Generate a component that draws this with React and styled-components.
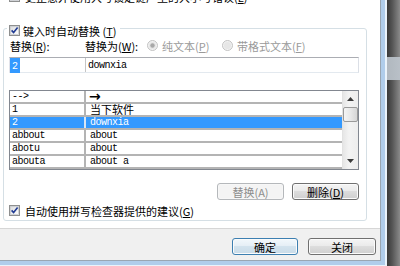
import React from "react";
import styled, { createGlobalStyle } from "styled-components";

const Global = createGlobalStyle`
  html, body { margin: 0; padding: 0; }
  body {
    width: 400px; height: 266px; overflow: hidden;
    font-family: "Noto Sans CJK SC", "Liberation Sans", sans-serif;
    font-size: 11px; color: #000;
  }
`;

const Screen = styled.div`
  display: flex;
  width: 400px;
  height: 266px;
  overflow: hidden;
`;

const Frame = styled.div`
  flex: none;
  width: 387px;
  height: 267px;
  box-sizing: border-box;
  border-right: 2px solid #eaf3fb;
  border-bottom: 2px solid #eaf3fb;
`;

const FrameInner = styled.div`
  box-sizing: border-box;
  height: 100%;
  border-right: 4px solid #b0cdeb;
  border-bottom: 4px solid #b0cdeb;
`;

const Client = styled.div`
  box-sizing: border-box;
  width: 381px;
  height: 261px;
  border-right: 1px solid #9aa6b2;
  border-bottom: 1px solid #9aa6b2;
  display: flex;
  flex-direction: column;
`;

const Desktop = styled.div`
  flex: 1;
  background:
    linear-gradient(to bottom, transparent 57px, rgba(190, 198, 206, 0.9) 57px, rgba(190, 198, 206, 0.9) 80px, transparent 80px),
    linear-gradient(to right, #3a3a3a, #555 40%, #8a8a8a);
`;

const TabPage = styled.div`
  box-sizing: border-box;
  height: 229px;
  background: #fff;
  border-bottom: 1px solid #d6d6d6;
  padding-left: 3px;
  display: flex;
  flex-direction: column;
  overflow: hidden;
`;

const CheckLine = styled.div`
  display: flex;
  align-items: center;
  gap: ${(p) => p.$gap || 4}px;
  height: 13px;
  padding-left: ${(p) => p.$indent || 0}px;
  margin-top: ${(p) => p.$mt || 0}px;
  white-space: nowrap;
  color: #000;
`;

const GroupBox = styled.div`
  box-sizing: border-box;
  width: 364px;
  height: 193px;
  margin-top: ${(p) => p.$mt}px;
  border: 1px solid #d5dfe5;
  border-radius: 3px;
  padding: 0 7px 0 5px;
  display: flex;
  flex-direction: column;
`;

const Legend = styled.div`
  align-self: flex-start;
  display: flex;
  align-items: center;
  gap: 3px;
  height: 13px;
  margin: -5px 0 0 -2px;
  padding: 0 3px 0 2px;
  background: #fff;
  white-space: nowrap;
`;

const Key = styled.span`
  text-decoration: underline;
`;

const LabelsRow = styled.div`
  display: flex;
  align-items: center;
  height: 13px;
  margin-top: 2px;
  white-space: nowrap;
`;

const FieldLabel = styled.div`
  flex: none;
  width: ${(p) => p.$w}px;
  padding-left: ${(p) => p.$pl || 0}px;
  box-sizing: border-box;
`;

const RadioItem = styled.div`
  flex: none;
  width: ${(p) => p.$w}px;
  display: flex;
  align-items: center;
  gap: 4px;
  color: #9a9a9a;
`;

const InputRow = styled.div`
  box-sizing: border-box;
  height: 16px;
  margin-top: 5px;
  border: 1px solid;
  border-color: #abadb3 #dbdfe6 #e3e9ef #e2e3ea;
  display: flex;
  align-items: center;
`;

const InputCell = styled.div`
  box-sizing: border-box;
  height: 100%;
  display: flex;
  align-items: center;
  ${(p) => (p.$w ? `flex: none; width: ${p.$w}px; border-right: 1px solid #c5c5c5;` : "flex: 1;")}
  padding-left: ${(p) => p.$pl}px;
`;

const Mono = styled.span`
  font-family: "Liberation Mono", "DejaVu Sans Mono", monospace;
  font-size: 10px;
  letter-spacing: -0.5px;
  color: ${(p) => (p.$light ? "#fff" : "#000")};
`;

const Highlight = styled.span`
  background: #3399ff;
  color: #fff;
  padding: 0 2px;
  line-height: 13px;
`;

const TableBox = styled.div`
  box-sizing: border-box;
  height: 80px;
  margin-top: 17px;
  border: 1px solid #828790;
  display: flex;
`;

const List = styled.div`
  flex: 1;
  display: flex;
  flex-direction: column;
`;

const Row = styled.div`
  box-sizing: border-box;
  height: 13px;
  display: grid;
  grid-template-columns: 76px 1fr;
  border-bottom: 2px solid #b4b4b4;
  background: ${(p) => (p.$selected ? "#3399ff" : "#fff")};
  color: ${(p) => (p.$selected ? "#fff" : "#000")};
`;

const Cell = styled.div`
  box-sizing: border-box;
  display: flex;
  align-items: center;
  padding-left: ${(p) => (p.$first ? 2 : 4)}px;
  ${(p) => (p.$first ? `border-right: 2px solid ${p.$selected ? "#d8e6f5" : "#b4b4b4"};` : "")}
  white-space: nowrap;
  overflow: hidden;
  line-height: 11px;
`;

const Arrow = styled.span`
  font-family: "DejaVu Sans", sans-serif;
  font-weight: bold;
  font-size: 14px;
  line-height: 11px;
  margin-left: -1px;
`;

const ScrollBar = styled.div`
  flex: none;
  width: 15px;
  display: flex;
  flex-direction: column;
  background: linear-gradient(to right, #e6e6e6, #f3f3f3 40%, #ededed);
  border-left: 1px solid #e2e2e2;
`;

const ScrollButton = styled.div`
  height: 16px;
  display: flex;
  align-items: center;
  justify-content: center;
`;

const Thumb = styled.div`
  box-sizing: border-box;
  height: 15px;
  border: 1px solid #9a9a9a;
  border-radius: 2px;
  background: linear-gradient(to right, #f4f4f4, #e8e8e8 50%, #d6d6d6);
`;

const Track = styled.div`
  flex: 1;
`;

const ButtonsRow = styled.div`
  display: flex;
  justify-content: flex-end;
  gap: ${(p) => p.$gap}px;
  margin-top: ${(p) => p.$mt}px;
  padding: ${(p) => p.$pad || 0};
`;

const Button = styled.div`
  box-sizing: border-box;
  width: ${(p) => p.$w}px;
  height: ${(p) => p.$h || 17}px;
  border: 1px solid ${(p) => (p.$default ? "#3c7fb1" : p.$disabled ? "#b5b8bb" : "#707070")};
  border-radius: 3px;
  background: ${(p) =>
    p.$disabled
      ? "#f4f4f4"
      : p.$default
      ? "linear-gradient(to bottom, #f2f8fc 0%, #e6eff6 45%, #d3e3ee 50%, #c8dbe8 100%)"
      : "linear-gradient(to bottom, #f4f4f4 0%, #ebebeb 45%, #dddddd 50%, #cfcfcf 100%)"};
  box-shadow: inset 0 0 0 1px ${(p) => (p.$disabled ? "#f7f7f7" : "#fbfbfb")};
  color: ${(p) => (p.$disabled ? "#8d8d8d" : "#000")};
  display: flex;
  align-items: center;
  justify-content: center;
  white-space: nowrap;
`;

const ButtonBar = styled.div`
  box-sizing: border-box;
  height: 31px;
  background: #f0f0f0;
`;

function CheckBox() {
  return (
    <svg width="11" height="11" viewBox="0 0 11 11" style={{ flex: "none" }}>
      <defs>
        <linearGradient id="cbg" x1="0" y1="0" x2="1" y2="1">
          <stop offset="0" stopColor="#dcdcdc" />
          <stop offset="1" stopColor="#ffffff" />
        </linearGradient>
      </defs>
      <rect x="0.5" y="0.5" width="10" height="10" fill="#fff" stroke="#8e8f8f" />
      <rect x="1.5" y="1.5" width="8" height="8" fill="url(#cbg)" stroke="#c5c8cc" strokeWidth="0.8" />
      <path d="M2.6 5.4 L4.6 7.6 L8.6 2.6" fill="none" stroke="#1f3a93" strokeWidth="1.6" />
    </svg>
  );
}

function Radio({ checked }) {
  return (
    <svg width="11" height="11" viewBox="0 0 11 11" style={{ flex: "none" }}>
      <circle cx="5.5" cy="5.5" r="5" fill="#f2f2f2" stroke="#c2c2c2" />
      <circle cx="5.5" cy="5.5" r="3.6" fill="#e6e6e6" />
      {checked && <circle cx="5.5" cy="5.5" r="2.2" fill="#a8a8a8" />}
    </svg>
  );
}

function Tri({ down }) {
  return (
    <svg width="7" height="4" viewBox="0 0 7 4">
      <path d={down ? "M0 0 L7 0 L3.5 4 Z" : "M0 4 L7 4 L3.5 0 Z"} fill="#3b3b3b" />
    </svg>
  );
}

const rows = [
  { a: "1", b: "当下软件", cjk: true },
  { a: "2", b: "downxia", selected: true },
  { a: "abbout", b: "about" },
  { a: "abotu", b: "about" },
  { a: "abouta", b: "about a" },
];

export default function App() {
  return (
    <>
      <Global />
      <Screen>
        <Frame>
          <FrameInner>
            <Client>
              <TabPage>
                <CheckLine $indent={6} $mt={-10} $gap={5}>
                  <CheckBox />
                  <span>更正意外使用大写锁定键产生的大小写错误(<Key>L</Key>)</span>
                </CheckLine>
                <GroupBox $mt={25}>
                  <Legend>
                    <CheckBox />
                    <span>键入时自动替换 (<Key>T</Key>)</span>
                  </Legend>
                  <LabelsRow>
                    <FieldLabel $w={76} $pl={1}>替换(<Key>R</Key>):</FieldLabel>
                    <FieldLabel $w={62}>替换为(<Key>W</Key>):</FieldLabel>
                    <RadioItem $w={75}>
                      <Radio checked />
                      <span>纯文本(<Key>P</Key>)</span>
                    </RadioItem>
                    <RadioItem $w={90}>
                      <Radio />
                      <span>带格式文本(<Key>F</Key>)</span>
                    </RadioItem>
                  </LabelsRow>
                  <InputRow>
                    <InputCell $w={76} $pl={0}>
                      <Highlight>
                        <Mono $light>2</Mono>
                      </Highlight>
                    </InputCell>
                    <InputCell $pl={2}>
                      <Mono>downxia</Mono>
                    </InputCell>
                  </InputRow>
                  <TableBox>
                    <List>
                      <Row>
                        <Cell $first>
                          <Mono>--&gt;</Mono>
                        </Cell>
                        <Cell>
                          <Arrow>→</Arrow>
                        </Cell>
                      </Row>
                      {rows.map((r, i) => (
                        <Row key={i} $selected={r.selected}>
                          <Cell $first $selected={r.selected}>
                            <Mono $light={r.selected}>{r.a}</Mono>
                          </Cell>
                          <Cell>
                            {r.cjk ? <span>{r.b}</span> : <Mono $light={r.selected}>{r.b}</Mono>}
                          </Cell>
                        </Row>
                      ))}
                    </List>
                    <ScrollBar>
                      <ScrollButton>
                        <Tri />
                      </ScrollButton>
                      <Thumb />
                      <Track />
                      <ScrollButton>
                        <Tri down />
                      </ScrollButton>
                    </ScrollBar>
                  </TableBox>
                  <ButtonsRow $gap={8} $mt={13}>
                    <Button $w={67} $disabled>替换(A)</Button>
                    <Button $w={67}>删除(<Key>D</Key>)</Button>
                  </ButtonsRow>
                  <CheckLine $mt={4} $gap={5}>
                    <CheckBox />
                    <span>自动使用拼写检查器提供的建议(<Key>G</Key>)</span>
                  </CheckLine>
                </GroupBox>
              </TabPage>
              <ButtonBar>
                <ButtonsRow $gap={10} $mt={0} $pad="9px 4px 0 0">
                  <Button $w={66} $default>确定</Button>
                  <Button $w={68}>关闭</Button>
                </ButtonsRow>
              </ButtonBar>
            </Client>
          </FrameInner>
        </Frame>
        <Desktop />
      </Screen>
    </>
  );
}
